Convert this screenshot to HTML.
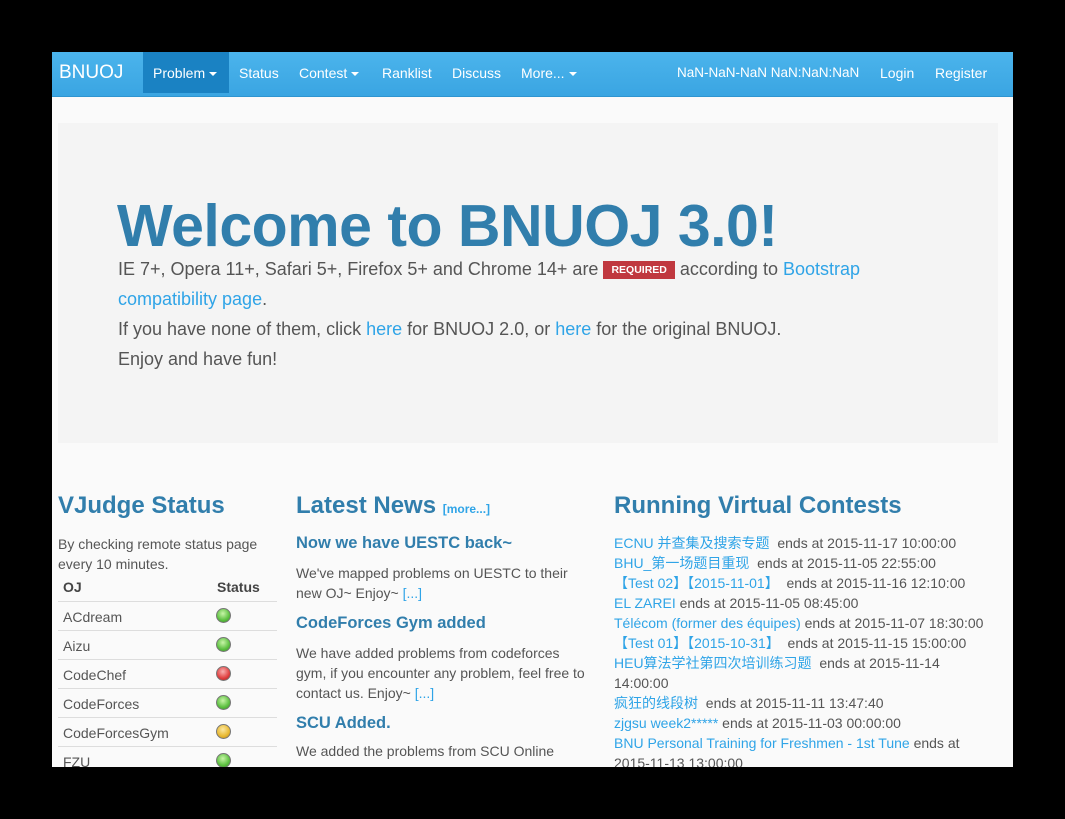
<!DOCTYPE html>
<html><head><meta charset="utf-8"><style>
*{margin:0;padding:0;box-sizing:border-box}
body{width:1065px;height:819px;background:#000;font-family:"Liberation Sans","Noto Sans CJK SC",sans-serif;position:relative;overflow:hidden}
#pg{position:absolute;left:52px;top:52px;width:961px;height:715px;background:#fafafa;overflow:hidden}
.nav{position:absolute;left:0;top:0;width:961px;height:45px;background:linear-gradient(#4bb4ec,#3aa5e2);border-bottom:1px solid #2f95d0}
.nav span{position:absolute;top:13px;color:#fff;font-size:14px;white-space:nowrap}
.car{display:inline-block;width:0;height:0;border-left:4px solid transparent;border-right:4px solid transparent;border-top:4px solid #fff;vertical-align:middle;margin-left:4px}
.act{position:absolute;left:91px;top:0;width:86px;height:41px;background:#1a82c3}
.ab{position:absolute;white-space:nowrap}
a{color:#2fa4e7;text-decoration:none}
.jt{position:absolute;left:6px;top:71px;width:940px;height:320px;background:#f4f4f4}
.jl{font-size:18px;color:#555}
h3{position:absolute;font-size:24px;color:#317eac;font-weight:bold;white-space:nowrap}
.s{font-size:14px;color:#555}
h4{position:absolute;font-size:16.5px;color:#317eac;font-weight:bold;white-space:nowrap}
.row{position:absolute;left:6px;width:219px;height:29px;border-top:1px solid #ddd;font-size:14px;color:#555}
.row span{position:absolute;left:5px;top:7px}
.dot{position:absolute;left:158px;top:6px;width:15px;height:15px;border-radius:50%;border:1px solid #777}
.g{background:radial-gradient(circle at 45% 35%,#c8f5a8,#5cc040 60%,#3a8a2a)}
.r{background:radial-gradient(circle at 45% 35%,#f8b0b0,#e04040 60%,#a02020)}
.y{background:radial-gradient(circle at 45% 35%,#fbe7a0,#e8b830 60%,#b08020)}
</style></head><body><div id="pg">
<div class="nav"><div class="act"></div>
<span style="left:7px;top:10px;font-size:19px">BNUOJ</span>
<span style="left:101px">Problem<i class="car"></i></span>
<span style="left:187px">Status</span>
<span style="left:247px">Contest<i class="car"></i></span>
<span style="left:330px">Ranklist</span>
<span style="left:400px">Discuss</span>
<span style="left:469px">More...<i class="car"></i></span>
<span style="left:625px;font-size:13.5px">NaN-NaN-NaN NaN:NaN:NaN</span>
<span style="left:828px">Login</span>
<span style="left:883px">Register</span>
</div>
<div class="jt"></div>
<div class="ab" style="left:65px;top:140px;font-size:59px;font-weight:bold;color:#317eac;letter-spacing:-0.5px">Welcome to BNUOJ 3.0!</div>
<div class="ab jl" style="left:66px;top:207px">IE 7+, Opera 11+, Safari 5+, Firefox 5+ and Chrome 14+ are <span style="display:inline-block;background:#c0383f;color:#fff;font-size:10.5px;font-weight:bold;padding:3px 8px;vertical-align:2px">REQUIRED</span> according to <a>Bootstrap</a></div>
<div class="ab jl" style="left:66px;top:237px"><a>compatibility page</a>.</div>
<div class="ab jl" style="left:66px;top:267px">If you have none of them, click <a>here</a> for BNUOJ 2.0, or <a>here</a> for the original BNUOJ.</div>
<div class="ab jl" style="left:66px;top:297px">Enjoy and have fun!</div>

<h3 style="left:6px;top:440px">VJudge Status</h3>
<div class="ab s" style="left:6px;top:482px;line-height:20px">By checking remote status page<br>every 10 minutes.</div>
<div class="ab s" style="left:11px;top:527px;font-weight:bold;color:#444">OJ</div>
<div class="ab s" style="left:165px;top:527px;font-weight:bold;color:#444">Status</div>
<div class="row" style="top:549px"><span>ACdream</span><i class="dot g"></i></div>
<div class="row" style="top:578px"><span>Aizu</span><i class="dot g"></i></div>
<div class="row" style="top:607px"><span>CodeChef</span><i class="dot r"></i></div>
<div class="row" style="top:636px"><span>CodeForces</span><i class="dot g"></i></div>
<div class="row" style="top:665px"><span>CodeForcesGym</span><i class="dot y"></i></div>
<div class="row" style="top:694px"><span>FZU</span><i class="dot g"></i></div>

<h3 style="left:244px;top:440px">Latest News <a style="font-size:12px">[more...]</a></h3>
<h4 style="left:244px;top:482px">Now we have UESTC back~</h4>
<div class="ab s" style="left:244px;top:511px;line-height:20px">We've mapped problems on UESTC to their<br>new OJ~ Enjoy~ <a>[...]</a></div>
<h4 style="left:244px;top:562px">CodeForces Gym added</h4>
<div class="ab s" style="left:244px;top:591px;line-height:20px">We have added problems from codeforces<br>gym, if you encounter any problem, feel free to<br>contact us. Enjoy~ <a>[...]</a></div>
<h4 style="left:244px;top:662px">SCU Added.</h4>
<div class="ab s" style="left:244px;top:691px">We added the problems from SCU Online</div>

<h3 style="left:562px;top:440px">Running Virtual Contests</h3>
<div class="ab s" style="left:562px;top:481px;line-height:20px">
<a>ECNU 并查集及搜索专题</a>&nbsp; ends at 2015-11-17 10:00:00<br>
<a>BHU_第一场题目重现</a>&nbsp; ends at 2015-11-05 22:55:00<br>
<a>【Test 02】【2015-11-01】</a>&nbsp; ends at 2015-11-16 12:10:00<br>
<a>EL ZAREI</a> ends at 2015-11-05 08:45:00<br>
<a>Télécom (former des équipes)</a> ends at 2015-11-07 18:30:00<br>
<a>【Test 01】【2015-10-31】</a>&nbsp; ends at 2015-11-15 15:00:00<br>
<a>HEU算法学社第四次培训练习题</a>&nbsp; ends at 2015-11-14<br>
14:00:00<br>
<a>疯狂的线段树</a>&nbsp; ends at 2015-11-11 13:47:40<br>
<a>zjgsu week2*****</a> ends at 2015-11-03 00:00:00<br>
<a>BNU Personal Training for Freshmen - 1st Tune</a> ends at<br>
2015-11-13 13:00:00</div>
</div></body></html>
